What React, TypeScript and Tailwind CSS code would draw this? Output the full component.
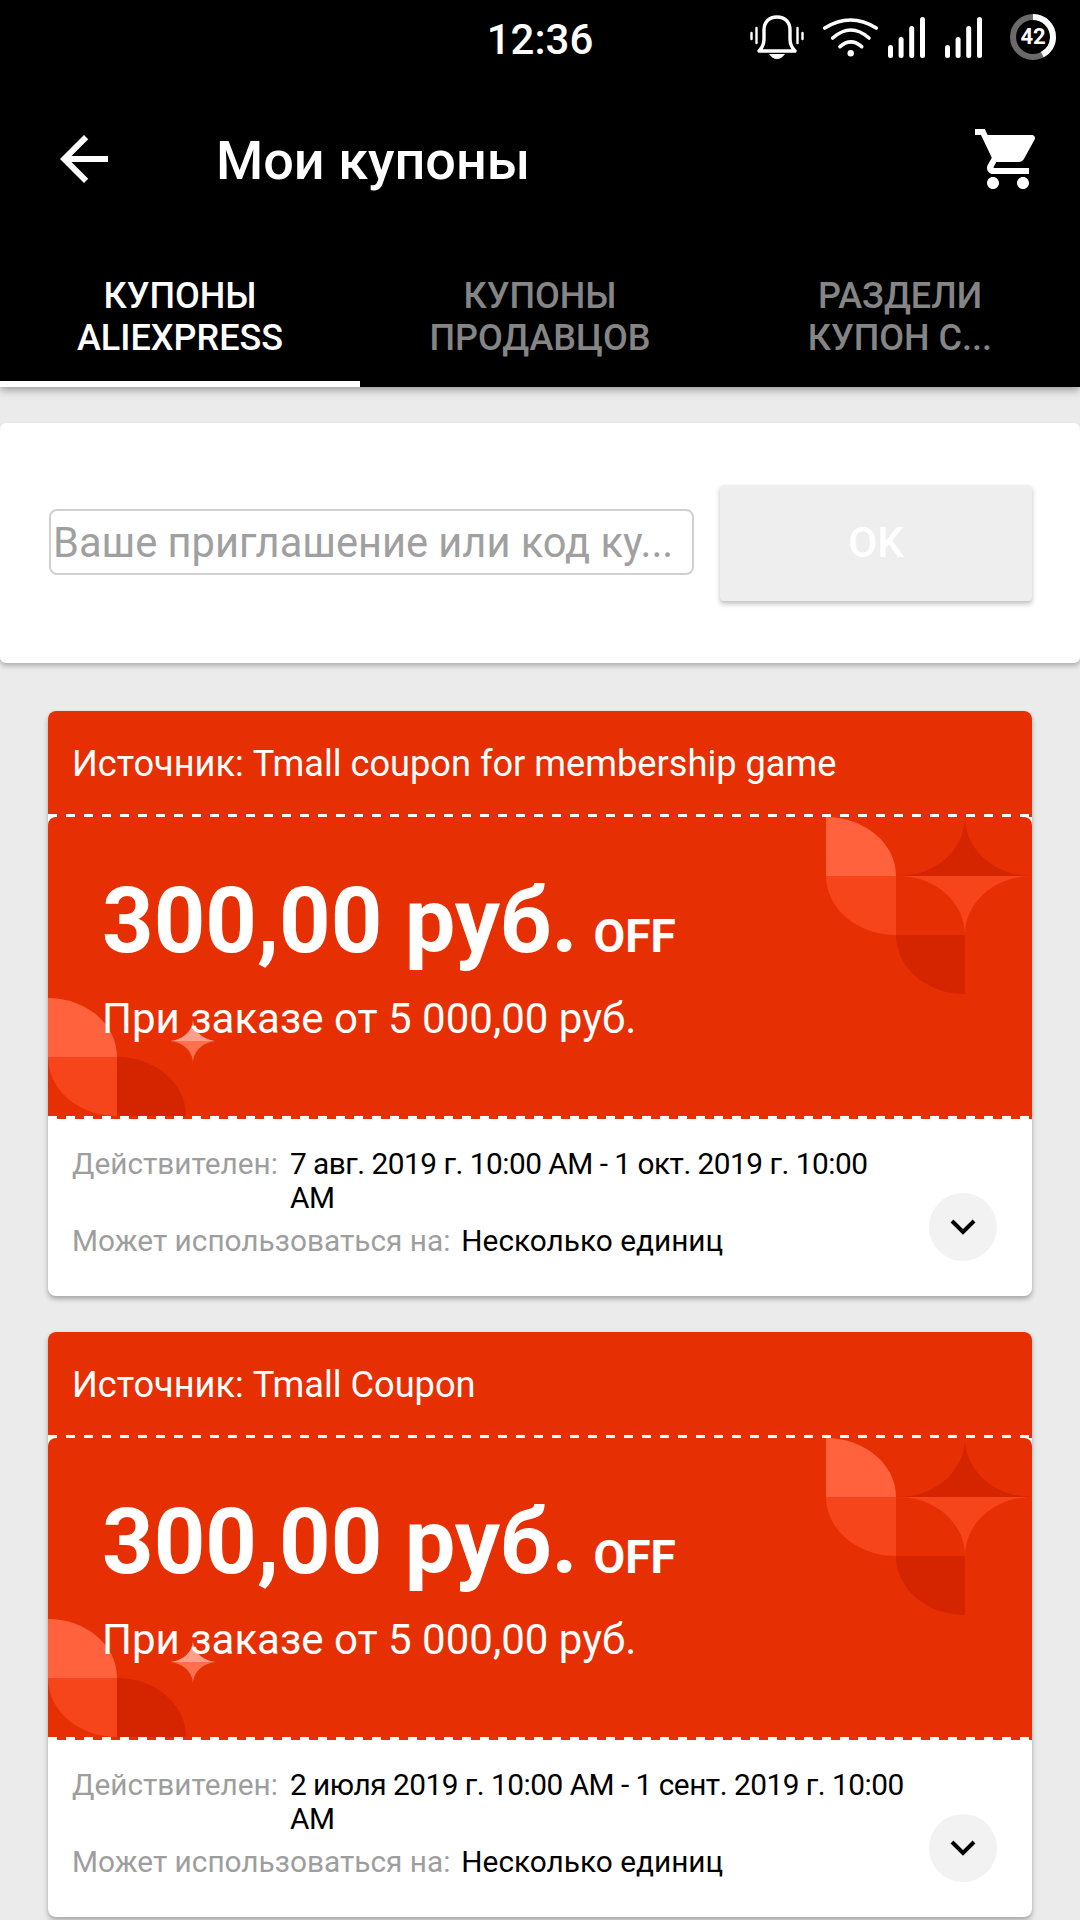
import React from "react";

// ---------------------------------------------------------------------------
// Status bar icons
// ---------------------------------------------------------------------------
function BellIcon() {
  return (
    <svg width="54" height="44" viewBox="0 0 54 44" fill="none" stroke="#fff">
      <path d="M9 36c3-3 5-6 5-12v-9C14 7 19 2 27 2s13 5 13 13v9c0 6 2 9 5 12z" strokeWidth="3.4" strokeLinejoin="round" />
      <path d="M19 39c2 3 5 5 8 5s6-2 8-5z" fill="#fff" stroke="none" />
      <path d="M1.5 18v6M6.5 13v15M47.5 13v15M52.5 18v6" strokeWidth="2.4" strokeLinecap="round" />
    </svg>
  );
}

function WifiIcon() {
  return (
    <svg width="55" height="39" viewBox="0 0 55 39" fill="none" stroke="#fff" strokeWidth="3.6" strokeLinecap="round">
      <path d="M1.8 10Q27.5 -6 53.2 10" />
      <path d="M9.7 20Q27.8 4 46 20" />
      <path d="M17 28.7Q27.8 19 38.7 28.7" />
      <circle cx="27.7" cy="35.3" r="3.2" fill="#fff" stroke="none" />
    </svg>
  );
}

function SignalIcon() {
  return (
    <svg width="37" height="41" viewBox="0 0 37 41" fill="#fff">
      <rect x="0" y="28" width="5" height="13" rx="2.5" />
      <rect x="10.6" y="20" width="5" height="21" rx="2.5" />
      <rect x="21.2" y="9" width="5" height="32" rx="2.5" />
      <rect x="32" y="0" width="5" height="41" rx="2.5" />
    </svg>
  );
}

function BatteryRing() {
  const r = 20;
  const c = 2 * Math.PI * r;
  return (
    <div className="relative flex h-[46px] w-[46px] items-center justify-center">
      <svg width="46" height="46" viewBox="0 0 46 46" fill="none" className="absolute inset-0 -rotate-90">
        <circle cx="23" cy="23" r={r} stroke="#6a6a6a" strokeWidth="6" />
        <circle cx="23" cy="23" r={r} stroke="#fff" strokeWidth="6" strokeDasharray={`${c * 0.42} ${c}`} />
      </svg>
      <span className="relative text-[22px] leading-none font-bold text-white">42</span>
    </div>
  );
}

// ---------------------------------------------------------------------------
// Coupon background shapes
// ---------------------------------------------------------------------------
function TopDecor() {
  return (
    <svg width="206" height="177" viewBox="0 0 206 177" className="absolute top-0 right-0">
      <path d="M0 0c38 0 70 26 70 59H0z" fill="#ff623c" />
      <path d="M0 59h70v59C32 118 0 92 0 59z" fill="#f6441b" />
      <path d="M70 118h69v59c-38 0-69-26-69-59z" fill="#d42500" />
      <path d="M139 0c0 33 30 59 67 59H72c37 0 67-26 67-59z" fill="#d42500" />
      <path d="M72 59h134c-37 0-67 26-67 59 0-33-30-59-67-59z" fill="#f6441b" />
    </svg>
  );
}

function BottomDecor() {
  return (
    <svg width="170" height="118" viewBox="0 0 170 118" className="absolute bottom-0 left-0">
      <path d="M0 0c38 0 69 26 69 59H0z" fill="#ff623c" />
      <path d="M0 59h69v59C31 118 0 92 0 59z" fill="#f6441b" />
      <path d="M69 59c38 0 69 26 69 59H69z" fill="#d42500" />
    </svg>
  );
}

function Sparkle() {
  return (
    <svg width="50" height="44" viewBox="0 0 50 44" className="absolute bottom-[53px] left-[120px]">
      <path d="M25 0c0 12 11 22 25 22H0c14 0 25-10 25-22z" fill="#ff9f8a" />
      <path d="M0 22h50c-14 0-25 10-25 22 0-12-11-22-25-22z" fill="#ff704e" />
    </svg>
  );
}

// ---------------------------------------------------------------------------
// Data
// ---------------------------------------------------------------------------
const COUPONS = [
  { source: "Источник: Tmall coupon for membership game", dates: "7 авг. 2019 г. 10:00 AM - 1 окт. 2019 г. 10:00 AM" },
  { source: "Источник: Tmall Coupon", dates: "2 июля 2019 г. 10:00 AM - 1 сент. 2019 г. 10:00 AM" },
];

const DASHES = "h-[3px] bg-[repeating-linear-gradient(90deg,#fff_0,#fff_9px,transparent_9px,transparent_18px)]";

function Coupon({ source, dates }: { source: string; dates: string }) {
  return (
    <div className="h-[585px] shrink-0 overflow-hidden rounded-[8px] bg-white shadow-[0_3px_5px_rgba(0,0,0,0.3)]">
      <div className="flex h-[106px] flex-col bg-[#e72f04]">
        <div className="flex flex-1 items-center pt-[4px] pl-[24px] text-[36.2px] leading-none text-white">{source}</div>
        <div className={DASHES} />
      </div>
      <div className="relative h-[299px] overflow-hidden rounded-t-[8px] bg-[#e72f04] pt-[59px] pl-[54px] text-white">
        <TopDecor />
        <BottomDecor />
        <Sparkle />
        <div className="relative flex items-baseline">
          <span className="text-[90px] leading-[92px] font-bold">300,00 руб.</span>
          <span className="ml-[16px] text-[46px] leading-none font-bold">OFF</span>
        </div>
        <div className="relative mt-[28px] text-[42px] leading-[46px]">При заказе от 5 000,00 руб.</div>
      </div>
      <div className={`bg-[#e72f04] ${DASHES}`} />
      <div className="relative pt-[28px] pr-[120px] pl-[24px] text-[29.8px] leading-[34px] text-black">
        <div className="flex gap-[12px]">
          <span className="shrink-0 text-[#9e9e9e]">Действителен:</span>
          <span className="tracking-[-0.5px]">{dates}</span>
        </div>
        <div className="mt-[9px] flex gap-[11px]">
          <span className="shrink-0 text-[#9e9e9e]">Может использоваться на:</span>
          <span>Несколько единиц</span>
        </div>
        <div className="absolute top-[74px] right-[35px] flex h-[68px] w-[68px] items-center justify-center rounded-full bg-[#f2f2f2]">
          <svg width="26" height="16" viewBox="0 0 26 16" fill="none" stroke="#000" strokeWidth="4">
            <path d="M2 2l11 11L24 2" />
          </svg>
        </div>
      </div>
    </div>
  );
}

// ---------------------------------------------------------------------------
// Page
// ---------------------------------------------------------------------------
export default function App() {
  return (
    <div className="h-[1920px] w-[1080px] overflow-hidden bg-[#ebebeb] font-['Roboto',sans-serif]">
      {/* Header */}
      <header className="relative z-10 bg-black text-white shadow-[0_3px_8px_rgba(0,0,0,0.35)]">
        <div className="grid h-[80px] grid-cols-[1fr_auto_1fr] items-center">
          <div />
          <span className="text-[42px] leading-none font-medium">12:36</span>
          <div className="flex items-center justify-end pr-[24px] pb-[6px]">
            <BellIcon />
            <div className="ml-[19px]">
              <WifiIcon />
            </div>
            <div className="ml-[10px]">
              <SignalIcon />
            </div>
            <div className="ml-[20px]">
              <SignalIcon />
            </div>
            <div className="ml-[28px]">
              <BatteryRing />
            </div>
          </div>
        </div>

        <div className="flex h-[158px] items-center justify-between pr-[36px] pl-[48px]">
          <div className="flex items-center">
            <svg width="72" height="72" viewBox="0 0 24 24" fill="#fff">
              <path d="M20 11H7.83l5.59-5.59L12 4l-8 8 8 8 1.41-1.41L7.83 13H20v-2z" />
            </svg>
            <h1 className="ml-[96px] pt-[4px] text-[54px] leading-none font-medium">Мои купоны</h1>
          </div>
          <svg width="72" height="72" viewBox="0 0 24 24" fill="#fff">
            <path d="M7 18c-1.1 0-1.99.9-1.99 2S5.9 22 7 22s2-.9 2-2-.9-2-2-2zM1 2v2h2l3.6 7.59-1.35 2.45c-.16.28-.25.61-.25.96 0 1.1.9 2 2 2h12v-2H7.42c-.14 0-.25-.11-.25-.25l.03-.12.9-1.63h7.45c.75 0 1.41-.41 1.75-1.03l3.58-6.49c.08-.14.12-.31.12-.48 0-.55-.45-1-1-1H5.21l-.94-2H1zm16 16c-1.1 0-1.99.9-1.99 2s.89 2 1.99 2 2-.9 2-2-.9-2-2-2z" />
          </svg>
        </div>

        <div className="grid h-[149px] grid-cols-3 text-center text-[36px] leading-[42px] font-medium">
          <div className="border-b-[6px] border-white pt-[37px]">
            КУПОНЫ
            <br />
            ALIEXPRESS
          </div>
          <div className="pt-[37px] text-[#858585]">
            КУПОНЫ
            <br />
            ПРОДАВЦОВ
          </div>
          <div className="pt-[37px] text-[#858585]">
            РАЗДЕЛИ
            <br />
            КУПОН С...
          </div>
        </div>
      </header>

      {/* Coupon code form */}
      <div className="mt-[36px] flex h-[240px] items-center gap-[26px] rounded-[6px] bg-white pr-[48px] pl-[49px] shadow-[0_3px_5px_rgba(0,0,0,0.25)]">
        <input
          readOnly
          placeholder="Ваше приглашение или код ку..."
          className="mb-[2px] h-[66px] w-[645px] rounded-[8px] border-2 border-[#d0d0d0] px-[2px] text-[41.6px] outline-none placeholder:text-[#a0a0a0]"
        />
        <button className="mb-[1px] h-[116px] flex-1 rounded-[4px] bg-[#eeeeee] text-[42px] font-medium text-white shadow-[0_3px_5px_rgba(0,0,0,0.25)]">
          OK
        </button>
      </div>

      {/* Coupons */}
      <div className="mt-[48px] flex flex-col gap-[36px] px-[48px]">
        {COUPONS.map((coupon) => (
          <Coupon key={coupon.source} source={coupon.source} dates={coupon.dates} />
        ))}
      </div>
    </div>
  );
}
